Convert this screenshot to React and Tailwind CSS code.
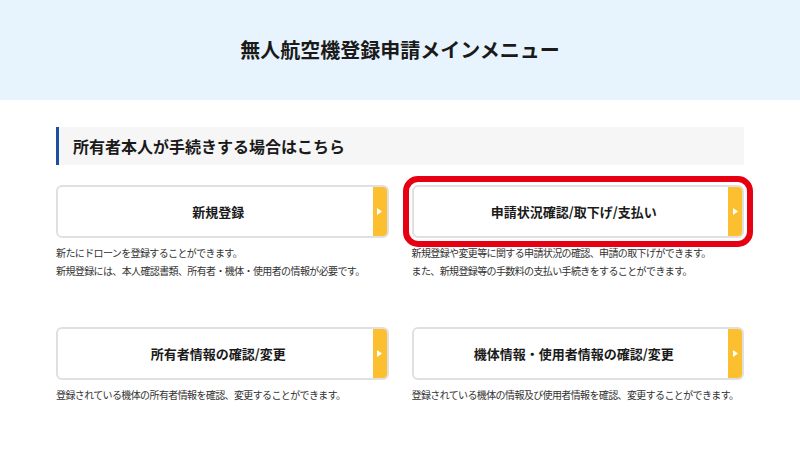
import React from "react";

const font = { fontFamily: '"Noto Sans CJK JP", "Noto Sans", sans-serif' };

function Card({ title, lines, highlight }) {
  return (
    <div className="flex flex-col">
      <div className="relative">
        {highlight && (
          <div className="absolute -inset-[9px] rounded-[15px] border-[6px] border-[#e60012] pointer-events-none" />
        )}
        <div className="flex h-[53px] overflow-hidden rounded-[6px] border-2 border-[#e0e0e0] bg-white">
          <div className="flex flex-1 items-center justify-center pl-[6px] text-[13px] font-bold text-[#1a1a1a]">
            {title}
          </div>
          <div className="flex w-[14px] items-center justify-center bg-[#fcbf2f]">
            <svg width="5" height="7" viewBox="0 0 5 7">
              <path d="M0 0 L5 3.5 L0 7 Z" fill="#ffffff" />
            </svg>
          </div>
        </div>
      </div>
      <div className="mt-[6px] flex flex-col whitespace-nowrap text-[10px] leading-[18px] tracking-[-0.62px] text-[#333]">
        {lines.map((l, i) => (
          <div key={i}>{l}</div>
        ))}
      </div>
    </div>
  );
}

export default function App() {
  return (
    <div className="min-h-[465px] w-full bg-white" style={font}>
      <div className="flex h-[100px] items-center justify-center bg-[#e8f4fd]">
        <h1 className="text-[20px] font-bold text-[#1a1a1a]">無人航空機登録申請メインメニュー</h1>
      </div>
      <div className="mx-auto w-[688px] pt-[27px]">
        <div className="flex h-[38px] items-center border-l-[3px] border-[#1e4f9c] bg-[#f6f6f6] pl-[14px]">
          <h2 className="text-[16px] font-bold text-[#1a1a1a]">所有者本人が手続きする場合はこちら</h2>
        </div>
        <div className="mt-[20px] grid grid-cols-2 gap-x-[23px] gap-y-[47px]">
          <Card
            title="新規登録"
            lines={[
              "新たにドローンを登録することができます。",
              "新規登録には、本人確認書類、所有者・機体・使用者の情報が必要です。",
            ]}
          />
          <Card
            title="申請状況確認/取下げ/支払い"
            highlight
            lines={[
              "新規登録や変更等に関する申請状況の確認、申請の取下げができます。",
              "また、新規登録等の手数料の支払い手続きをすることができます。",
            ]}
          />
          <Card
            title="所有者情報の確認/変更"
            lines={["登録されている機体の所有者情報を確認、変更することができます。"]}
          />
          <Card
            title="機体情報・使用者情報の確認/変更"
            lines={["登録されている機体の情報及び使用者情報を確認、変更することができます。"]}
          />
        </div>
      </div>
    </div>
  );
}
